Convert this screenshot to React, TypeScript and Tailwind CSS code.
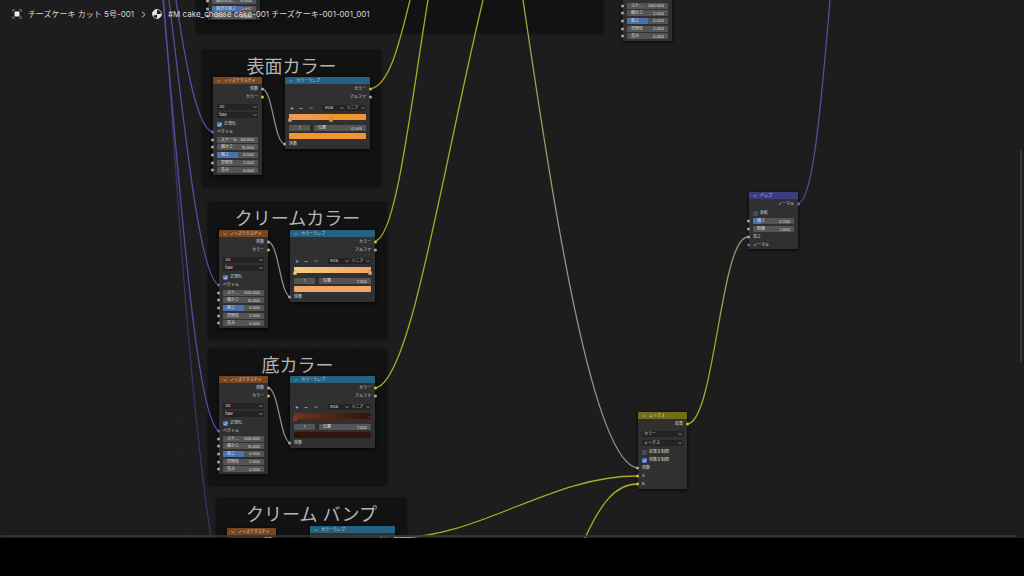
import type { ReactNode } from 'react'

type SocketColor = 'gray' | 'yellow' | 'purple'

const SOCKET: Record<SocketColor, string> = {
  gray:   'bg-[#a8a8a8]',
  yellow: 'bg-[#c7c729]',
  purple: 'bg-[#6363c7]',
}

function Socket({ color, side }: { color: SocketColor; side: 'left' | 'right' }) {
  const edge = side === 'left' ? '-left-[2px]' : '-right-[2px]'
  return (
    <span className={`absolute top-1/2 -translate-y-1/2 size-[3px] rounded-full ${edge} ${SOCKET[color]}`} />
  )
}

function Chevron({ className }: { className: string }) {
  return (
    <svg className={className} viewBox="0 0 8 8" fill="none" stroke="#c8c8c8" strokeWidth="1.3" aria-hidden="true">
      <path d="M1 2.5l3 3 3-3" />
    </svg>
  )
}

interface NodeProps {
  title:    string
  header:   string
  position: string
  children: ReactNode
}

function Node({ title, header, position, children }: NodeProps) {
  return (
    <section className={`absolute rounded-[1px] bg-[#303030] shadow-[0_1px_3px_1px_rgba(0,0,0,0.55)] ${position}`}>
      <header className={`flex h-[7px] items-center gap-[3px] rounded-t-[1px] pl-1 ${header}`}>
        <button aria-label={title} className="flex">
          <Chevron className="size-[4px]" />
        </button>
        <h3>{title}</h3>
      </header>
      {children}
    </section>
  )
}

function Output({ label, color = 'gray' }: { label: string; color?: SocketColor }) {
  return (
    <div className="relative flex h-[8px] items-center justify-end pr-1">
      {label}
      <Socket color={color} side="right" />
    </div>
  )
}

function Input({ label, color = 'gray' }: { label: string; color?: SocketColor }) {
  return (
    <div className="relative flex h-[8px] items-center pl-1">
      {label}
      <Socket color={color} side="left" />
    </div>
  )
}

function Dropdown({ label, value }: { label: string; value: string }) {
  return (
    <div className="relative min-w-0 flex-1">
      <select
        aria-label={label}
        defaultValue={value}
        className="block h-[6px] w-full appearance-none rounded-[1px] bg-[#232323] pl-[2px] leading-[6px]"
      >
        <option>{value}</option>
      </select>
      <Chevron className="pointer-events-none absolute right-[1px] top-[1px] size-[4px]" />
    </div>
  )
}

function Check({ label, checked = false }: { label: string; checked?: boolean }) {
  return (
    <label className="relative flex h-[8px] items-center gap-[2px] px-1">
      <input
        type="checkbox"
        defaultChecked={checked}
        className="peer size-[5px] appearance-none rounded-[1px] bg-[#4b4b4b] checked:bg-[#4772b3]"
      />
      <svg
        className="pointer-events-none absolute left-1 hidden size-[5px] peer-checked:block"
        viewBox="0 0 10 10" fill="none" stroke="#fff" strokeWidth="1.6" aria-hidden="true"
      >
        <path d="M2 5l2.4 2.6L8.3 2.4" />
      </svg>
      {label}
    </label>
  )
}

interface FieldProps {
  label:  string
  value:  string
  fill?:  number
  socket?: boolean
}

function Field({ label, value, fill = 0, socket = true }: FieldProps) {
  return (
    <div className="relative flex min-h-0 flex-1 items-center px-1">
      <label className="relative flex h-[6px] w-full items-center overflow-hidden rounded-[1px] bg-[#545454] px-1">
        <span className="absolute inset-y-0 left-0 bg-[#4772b3]" style={{ width: `${fill * 100}%` }} />
        <span className="relative whitespace-nowrap">{label}</span>
        <input defaultValue={value} className="relative h-full w-0 min-w-0 flex-1 bg-transparent text-right leading-[6px]" />
      </label>
      {socket && <Socket color="gray" side="left" />}
    </div>
  )
}

function NoiseNode({ position, scaleLabel, scale }: { position: string; scaleLabel: string; scale: string }) {
  return (
    <Node title="ノイズテクスチャ" header="bg-[#79461d]" position={position}>
      <div className="pt-px">
        <Output label="係数" />
        <Output label="カラー" color="yellow" />
      </div>
      <div className="flex flex-col gap-[2px] px-1 pb-[2px] pt-[3px]">
        <Dropdown label="次元" value="3D" />
        <Dropdown label="タイプ" value="fBM" />
      </div>
      <Check label="正規化" checked />
      <Input label="ベクトル" color="purple" />
      <div className="mb-px flex h-[38px] flex-col">
        <Field label={scaleLabel} value={scale} />
        <Field label="細かさ" value="15.000" />
        <Field label="粗さ" value="0.500" fill={0.5} />
        <Field label="空隙性" value="2.000" />
        <Field label="歪み" value="0.000" />
      </div>
    </Node>
  )
}

interface RampProps {
  position: string
  gradient: string
  swatch:   string
  index:    string
  stops:    number[]
  colors:   string[]
  value:    string
}

function RampNode({ position, gradient, swatch, index, stops, colors, value }: RampProps) {
  return (
    <Node title="カラーランプ" header="bg-[#246283]" position={position}>
      <div className="pt-px">
        <Output label="カラー" color="yellow" />
        <Output label="アルファ" />
      </div>
      <div className="mt-1 flex h-[6px] items-center pl-1 pr-1">
        <div className="flex w-[34px] items-center gap-[5px] pl-px text-[6px] leading-none">
          <button aria-label="追加">+</button>
          <button aria-label="削除">−</button>
          <button aria-label="ツール" className="ml-px"><Chevron className="size-[4px]" /></button>
        </div>
        <div className="flex flex-1">
          <Dropdown label="カラーモード" value="RGB" />
          <Dropdown label="補間" value="リニア" />
        </div>
      </div>
      <div className={`relative mx-1 mt-[3px] h-[6px] ${gradient}`}>
        {stops.map((stop, i) => (
          <svg
            key={i}
            className="absolute top-[3px] h-[5px] w-[4px] -translate-x-1/2"
            style={{ left: `${stop * 100}%` }}
            viewBox="0 0 8 10"
            aria-hidden="true"
          >
            <path d="M4 0l3.5 4v5.5h-7V4z" fill={colors[i]} stroke="#8c6a50" strokeWidth="0.8" />
          </svg>
        ))}
      </div>
      <div className="mt-[5px] flex h-[6px] items-stretch gap-1 px-1">
        <input aria-label="ストップ" defaultValue={index} className="w-[21px] rounded-[1px] bg-[#545454] text-center leading-[6px]" />
        <div className="-mx-1 flex flex-1">
          <Field label="位置" value={value} socket={false} />
        </div>
      </div>
      <button aria-label="カラー" className={`mx-1 mt-[2px] block h-[6px] w-[calc(100%-8px)] rounded-[1px] ${swatch}`} />
      <div className="pb-px pt-px">
        <Input label="係数" />
      </div>
    </Node>
  )
}

function Frame({ title, position }: { title?: string; position: string }) {
  return (
    <div className={`absolute rounded-[3px] bg-[#121212] shadow-[0_0_2px_1px_rgba(0,0,0,0.25)] ${position}`}>
      {title && <h2 className="pt-[5px] text-center text-[18px] leading-[24px] text-[#b4b4b4]">{title}</h2>}
    </div>
  )
}

const WIRES = [
  { d: 'M155 0C163 130 174 400 188 538', stroke: '#202022' },
  { d: 'M164 0C177 190 190 400 211 538', stroke: '#37375f' },
  { d: 'M163 0C180 190 196 420 219 431', stroke: '#50509f' },
  { d: 'M169 0C184 120 199 278 219 285', stroke: '#50509f' },
  { d: 'M176 0C185 60 197 130 213 132',  stroke: '#50509f' },
  { d: 'M370 89C390 86 400 40 410 0',    stroke: '#aaaa24' },
  { d: 'M375 241C396 238 410 110 428 0', stroke: '#aaaa24' },
  { d: 'M375 388C410 384 440 180 483 0', stroke: '#aaaa24' },
  { d: 'M523 0C550 180 590 460 637 468', stroke: 'url(#yellow-gray)' },
  { d: 'M395 538C480 538 550 476 637 476', stroke: '#aaaa24' },
  { d: 'M585 538C600 505 615 484 637 484', stroke: '#aaaa24' },
  { d: 'M687 424C715 424 720 237 748 237', stroke: 'url(#mix-bump)' },
  { d: 'M798 203C812 203 820 120 830 0', stroke: '#50509f' },
  { d: 'M262 89C273 89 274 144 285 144', stroke: '#8a8a8a' },
  { d: 'M268 242C279 242 280 297 291 297', stroke: '#8a8a8a' },
  { d: 'M268 388C279 388 280 443 291 443', stroke: '#8a8a8a' },
]

function Wires() {
  return (
    <svg className="absolute inset-0 size-full" fill="none" strokeWidth="1.3" aria-hidden="true">
      <defs>
        <linearGradient id="yellow-gray" gradientUnits="userSpaceOnUse" x1="523" y1="0" x2="637" y2="468">
          <stop offset="0" stopColor="#a8a838" />
          <stop offset="0.5" stopColor="#929284" />
          <stop offset="1" stopColor="#8f8f8f" />
        </linearGradient>
        <linearGradient id="mix-bump" gradientUnits="userSpaceOnUse" x1="687" y1="424" x2="748" y2="237">
          <stop offset="0" stopColor="#aaaa24" />
          <stop offset="0.5" stopColor="#a4a430" />
          <stop offset="1" stopColor="#8f8f8f" />
        </linearGradient>
      </defs>
      {WIRES.map(wire => <path key={wire.d} d={wire.d} stroke={wire.stroke} />)}
    </svg>
  )
}

function Grid() {
  return (
    <svg className="absolute inset-0 size-full" aria-hidden="true">
      <defs>
        <pattern id="dots" width="35.4" height="35.4" y="27.5" patternUnits="userSpaceOnUse">
          <rect width="1" height="1" fill="#262626" />
        </pattern>
      </defs>
      <rect width="100%" height="100%" fill="url(#dots)" />
    </svg>
  )
}

function Breadcrumbs() {
  return (
    <nav className="absolute left-3 top-2 flex h-[12px] items-center whitespace-nowrap text-[8px] text-[#dadada]">
      <svg className="mr-[6px] size-[10px]" viewBox="0 0 20 20" fill="none" stroke="#9a9a9a" strokeWidth="1.6" aria-hidden="true">
        <rect x="5" y="5" width="10" height="10" rx="1" fill="#ececec" stroke="none" />
        <path d="M1.5 5.500V1.500H5.500M14.500 1.500H18.500V5.500M18.500 14.500V18.500H14.500M5.500 18.500H1.500V14.500" />
      </svg>
      <a href="#object" className="w-[113px]">チーズケーキ カット 5号-001</a>
      <svg className="mr-[6px] h-[7px] w-[5px]" viewBox="0 0 10 14" fill="none" stroke="#c8c8c8" strokeWidth="2" aria-hidden="true">
        <path d="M2 1.500L8 7L2 12.500" />
      </svg>
      <svg className="mr-[6px] size-[10px]" viewBox="0 0 20 20" aria-hidden="true">
        <circle cx="10" cy="10" r="9" fill="#1d1d1d" stroke="#e0e0e0" strokeWidth="1.6" />
        <path d="M10 1a9 9 0 0 0-9 9h9zM10 10h9a9 9 0 0 1-9 9z" fill="#e6e6e6" />
        <path d="M10 1a9 9 0 0 0-8.500 12Q8 14 10 10z" fill="#e6e6e6" />
      </svg>
      <a href="#material">#M cake_cheese cake-001 チーズケーキ-001-001_001</a>
    </nav>
  )
}

export default function App() {
  return (
    <div className="flex h-screen flex-col bg-black font-['Inter','Noto_Sans_CJK_JP',sans-serif] text-[#dcdcdc]">
      <main className="relative min-h-0 flex-1 overflow-hidden bg-[#1d1d1d] text-[4px] leading-[6px]">
        <Grid />
        <Frame position="left-[196px] top-0 h-[33px] w-[407px]" />
        <Frame title="表面カラー" position="left-[202px] top-[50px] h-[137px] w-[179px]" />
        <Frame title="クリームカラー" position="left-[208px] top-[202px] h-[137px] w-[179px]" />
        <Frame title="底カラー" position="left-[208px] top-[349px] h-[137px] w-[179px]" />
        <Frame title="クリーム バンプ" position="left-[216px] top-[498px] h-[137px] w-[191px]" />
        <Wires />

        <section className="absolute left-[208px] top-0 h-[20px] w-[52px] bg-[#303030] shadow-[0_1px_3px_1px_rgba(0,0,0,0.55)]">
          <div className="-mt-[3px] flex h-[23px] flex-col">
            <Field label="細部の大..." value="15.000" />
            <Field label="細部の粗さ" value="0.667" fill={0.667} />
            <Field label="歪み" value="0.000" />
          </div>
        </section>
        <section className="absolute left-[623px] top-0 w-[49px] bg-[#303030] pb-px pt-[2px] shadow-[0_1px_3px_1px_rgba(0,0,0,0.55)]">
          <div className="flex h-[38px] flex-col">
            <Field label="スケ..." value="300.000" />
            <Field label="細かさ" value="2.000" />
            <Field label="粗さ" value="0.500" fill={0.5} />
            <Field label="空隙性" value="2.000" />
            <Field label="歪み" value="0.000" />
          </div>
        </section>

        <NoiseNode position="left-[213px] top-[77px] w-[49px]" scaleLabel="スケール" scale="80.000" />
        <RampNode
          position="left-[285px] top-[77px] w-[85px]"
          gradient="bg-linear-to-r from-[#f29a5c] to-[#ef962e] to-55%"
          swatch="bg-[#ef962e]"
          index="1"
          stops={[0.01, 0.549]}
          colors={['#f29a5c', '#ef962e']}
          value="0.549"
        />
        <NoiseNode position="left-[219px] top-[230px] w-[49px]" scaleLabel="スケ..." scale="500.000" />
        <RampNode
          position="left-[290px] top-[230px] w-[85px]"
          gradient="bg-linear-to-r from-[#f4cf7e] to-[#f0a56b]"
          swatch="bg-[#f0a56b]"
          index="1"
          stops={[0.01, 0.99]}
          colors={['#f4cf7e', '#f0a56b']}
          value="1.000"
        />
        <NoiseNode position="left-[219px] top-[376px] w-[49px]" scaleLabel="スケ..." scale="500.000" />
        <RampNode
          position="left-[290px] top-[376px] w-[85px]"
          gradient="bg-linear-to-r from-[#75301a] to-[#2f160b]"
          swatch="bg-[#2f160b]"
          index="1"
          stops={[0.01, 0.99]}
          colors={['#75301a', '#2f160b']}
          value="1.000"
        />
        <NoiseNode position="left-[227px] top-[528px] w-[49px]" scaleLabel="スケ..." scale="500.000" />
        <RampNode
          position="left-[310px] top-[526px] w-[85px]"
          gradient="bg-linear-to-r from-black to-white"
          swatch="bg-white"
          index="1"
          stops={[0.01, 0.99]}
          colors={['#000000', '#ffffff']}
          value="1.000"
        />

        <Node title="バンプ" header="bg-[#3c3c83]" position="left-[749px] top-[192px] w-[49px]">
          <div className="pb-px pt-px">
            <Output label="ノーマル" color="purple" />
          </div>
          <Check label="反転" />
          <div className="flex h-[16px] flex-col">
            <Field label="強さ" value="0.200" fill={0.2} />
            <Field label="距離" value="1.000" />
          </div>
          <Input label="高さ" />
          <Input label="ノーマル" color="purple" />
        </Node>

        <Node title="ミックス" header="bg-[#6e6e1d]" position="left-[638px] top-[412px] w-[49px]">
          <div className="pt-px">
            <Output label="結果" color="yellow" />
          </div>
          <div className="flex flex-col gap-[3px] px-1 pb-[2px] pt-[3px]">
            <Dropdown label="データタイプ" value="カラー" />
            <Dropdown label="ブレンドモード" value="ミックス" />
          </div>
          <Check label="結果を制限" />
          <Check label="係数を制限" checked />
          <div className="pb-px">
            <Input label="係数" />
            <Input label="A" color="yellow" />
            <Input label="B" color="yellow" />
          </div>
        </Node>

        <Breadcrumbs />
        <div className="absolute bottom-[176px] right-[2px] top-[150px] w-[2px] rounded-full bg-[#343434]" />
        <div className="absolute bottom-px left-0 right-[7px] h-[2px] rounded-full bg-[#383838]/80" />
      </main>
      <footer className="h-[38px] shrink-0 bg-black" />
    </div>
  )
}
